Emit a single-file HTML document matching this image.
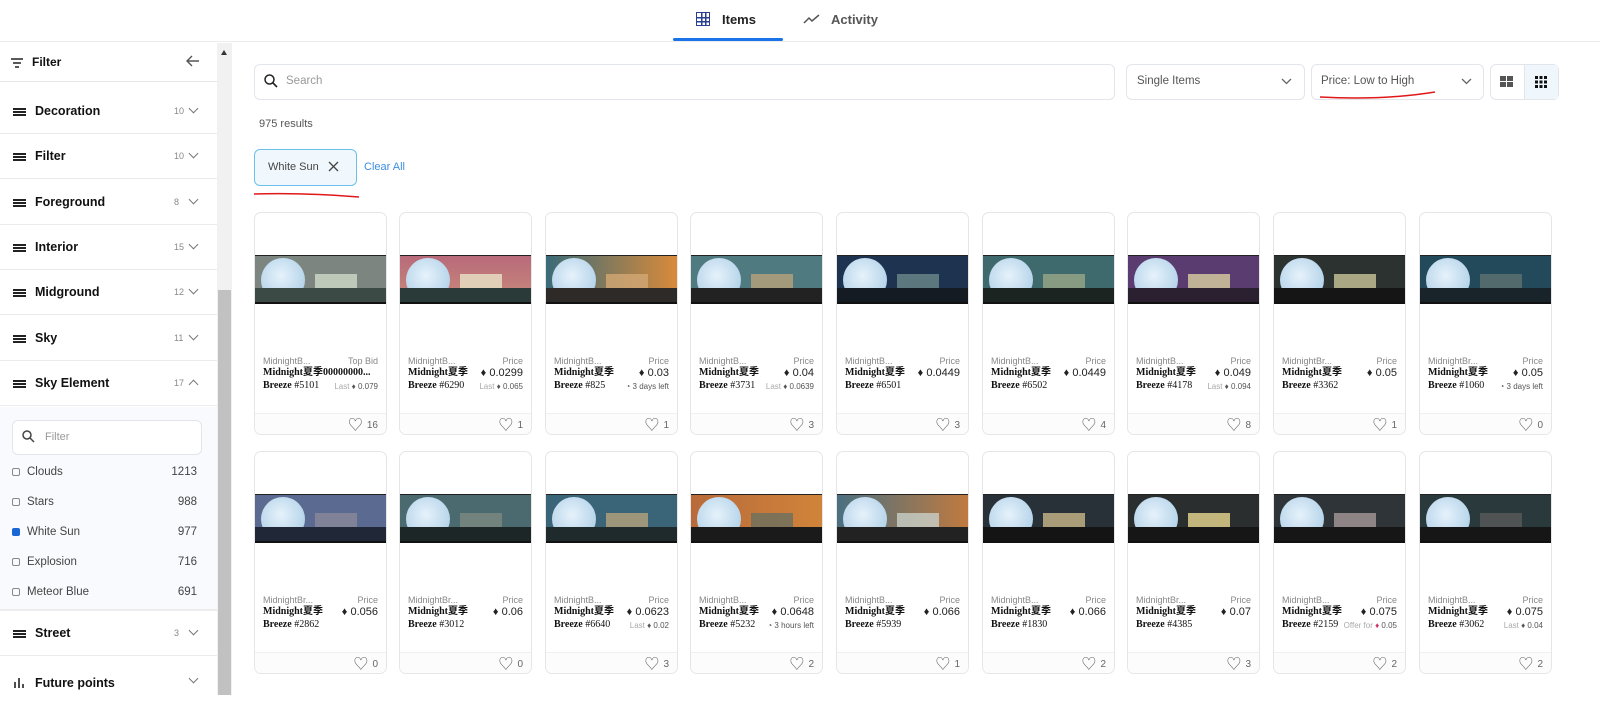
<!DOCTYPE html>
<html><head><meta charset="utf-8"><style>
*{box-sizing:border-box;margin:0;padding:0}
body{width:1600px;height:695px;overflow:hidden;background:#fff;font-family:"Liberation Sans","Noto Sans CJK SC",sans-serif;color:#333;position:relative}
.a{position:absolute}
.top{left:0;top:0;width:1600px;height:42px;border-bottom:1px solid #ececec}
.tab{font-size:13px;top:12px}
.side{left:0;top:43px;width:217px;height:652px}
.sec{position:absolute;left:0;width:217px;height:45px;border-bottom:1px solid #ececec}
.sec .ic{position:absolute;left:13px;top:19px;width:13px;height:8px;border-top:2px solid #222;border-bottom:2px solid #222}
.sec .ic:after{content:"";position:absolute;left:0;top:1px;width:13px;height:2px;background:#222}
.sec .t{position:absolute;left:35px;top:15px;font-size:12.5px;font-weight:bold;color:#111;line-height:15px}
.sec .n{position:absolute;left:174px;top:17px;font-size:9px;color:#888;line-height:11px}
.sec .cv{position:absolute;left:190px;top:16px;width:7px;height:7px;border-right:1.3px solid #777;border-bottom:1.3px solid #777;transform:rotate(45deg)}
.opt{position:absolute;left:12px;font-size:11.5px;color:#444;width:185px;line-height:14px}
.opt i{display:inline-block;width:8px;height:8px;border:1px solid #888;border-radius:2px;margin-right:7px;vertical-align:-1px}
.opt b{position:absolute;right:0;font-weight:normal}
.box{border:1px solid #e2e5ea;border-radius:6px;background:#fff}
.card{position:absolute;width:133px;height:223px;border:1px solid #e6e6e6;border-radius:7px;background:#fff;overflow:hidden}
.img{position:absolute;left:0;top:42px;width:131px;height:49px;overflow:hidden;border-top:1px solid #222;border-bottom:2px solid #111}
.img .m{position:absolute;left:6px;top:2px;width:44px;height:44px;border-radius:50%;background:radial-gradient(circle at 45% 40%,#e6f2fb,#b6d4ea 70%,#8fb6d6)}
.img .g{position:absolute;left:0;bottom:0;width:100%;height:14px;background:#1d2a2a}
.img .h{position:absolute;left:60px;top:18px;width:42px;height:22px;background:#cfd9c8;opacity:.8}
.l1,.r1,.l2,.r2,.l3,.r3{line-height:12px}
.l1{position:absolute;left:8px;top:142px;font-size:9px;color:#888}
.r1{position:absolute;right:8px;top:142px;font-size:9px;color:#888}
.l2{position:absolute;left:8px;top:154px;font-size:10px;font-weight:bold;font-family:"Liberation Serif","Noto Sans CJK SC",serif;color:#111}
.r2{position:absolute;right:8px;top:154px;font-size:11px;color:#222}
.l3{position:absolute;left:8px;top:167px;font-size:10px;color:#111;font-family:"Liberation Serif",serif}
.l3 b{font-weight:bold}
.r3{position:absolute;right:8px;top:168px;font-size:8px;color:#555}
.r3 s{text-decoration:none;color:#aaa}
.ft{position:absolute;left:0;top:200px;width:100%;height:23px;background:#fcfcfc;border-top:1px solid #f0f0f0}
.lk{position:absolute;right:8px;top:207px;font-size:10px;color:#666;line-height:12px}
.lk:before{content:"♡";font-size:15px;color:#666;margin-right:4px;vertical-align:-2px}
</style></head><body>
<div class="a top"></div>
<div class="a" style="left:696px;top:12px;width:14px;height:14px;border:1.5px solid #2a3f8f;background:linear-gradient(#2a3f8f,#2a3f8f) 3.5px 0/1.5px 100% no-repeat,linear-gradient(#2a3f8f,#2a3f8f) 8px 0/1.5px 100% no-repeat,linear-gradient(#2a3f8f,#2a3f8f) 0 3.5px/100% 1.5px no-repeat,linear-gradient(#2a3f8f,#2a3f8f) 0 8px/100% 1.5px no-repeat"></div>
<div class="a tab" style="left:722px;color:#222;font-weight:bold">Items</div>
<div class="a" style="left:673px;top:38px;width:110px;height:3px;background:#1a73e8;border-radius:2px"></div>
<svg class="a" style="left:803px;top:13px" width="17" height="12"><path d="M1 10 L6 5 L9 8 L16 2" stroke="#555" stroke-width="1.5" fill="none"/></svg>
<div class="a tab" style="left:831px;color:#555;font-weight:bold">Activity</div>

<div class="a side">
 <div class="a" style="left:0;top:0;width:217px;height:39px;border-bottom:1px solid #e6e6e6"></div>
 <svg class="a" style="left:11px;top:15px" width="12" height="10"><path d="M0 1h12M2 5h8M4 9h4" stroke="#222" stroke-width="1.6"/></svg>
 <div class="a" style="left:32px;top:12px;font-size:12px;font-weight:bold;color:#111">Filter</div>
 <svg class="a" style="left:186px;top:12px" width="14" height="12"><path d="M13 6H2M6 1L1 6l5 5" stroke="#555" stroke-width="1.4" fill="none"/></svg>
 <div class="sec" style="top:46px"><span class="ic"></span><span class="t">Decoration</span><span class="n">10</span><span class="cv"></span></div>
 <div class="sec" style="top:91px"><span class="ic"></span><span class="t">Filter</span><span class="n">10</span><span class="cv"></span></div>
 <div class="sec" style="top:137px"><span class="ic"></span><span class="t">Foreground</span><span class="n">8</span><span class="cv"></span></div>
 <div class="sec" style="top:182px"><span class="ic"></span><span class="t">Interior</span><span class="n">15</span><span class="cv"></span></div>
 <div class="sec" style="top:227px"><span class="ic"></span><span class="t">Midground</span><span class="n">12</span><span class="cv"></span></div>
 <div class="sec" style="top:273px"><span class="ic"></span><span class="t">Sky</span><span class="n">11</span><span class="cv"></span></div>
 <div class="sec" style="top:318px"><span class="ic"></span><span class="t">Sky Element</span><span class="n">17</span><span class="cv" style="transform:rotate(225deg);top:20px"></span></div>
 <div class="a" style="left:0;top:364px;width:217px;height:204px;background:#f8fafd;border-bottom:2px solid #ececec"></div>
 <div class="a box" style="left:12px;top:377px;width:190px;height:35px"></div>
 <svg class="a" style="left:22px;top:387px" width="13" height="13"><circle cx="5" cy="5" r="4" stroke="#444" stroke-width="1.5" fill="none"/><path d="M8 8l4 4" stroke="#444" stroke-width="1.5"/></svg>
 <div class="a" style="left:45px;top:388px;font-size:11px;color:#999">Filter</div>
 <div class="opt" style="top:422px"><i></i>Clouds<b>1213</b></div>
 <div class="opt" style="top:452px"><i></i>Stars<b>988</b></div>
 <div class="opt" style="top:482px"><i style="background:#1a66d6;border-color:#1a66d6"></i>White Sun<b>977</b></div>
 <div class="opt" style="top:512px"><i></i>Explosion<b>716</b></div>
 <div class="opt" style="top:542px"><i></i>Meteor Blue<b>691</b></div>
 <div class="sec" style="top:568px"><span class="ic"></span><span class="t">Street</span><span class="n">3</span><span class="cv"></span></div>
 <div class="sec" style="top:613px;border:0"><svg class="a" style="left:13px;top:22px" width="12" height="10"><path d="M2 4v6M6 0v10M10 6v4" stroke="#222" stroke-width="1.6"/></svg><span class="t" style="top:20px">Future points</span><span class="cv" style="top:19px"></span></div>
</div>
<div class="a" style="left:217px;top:43px;width:15px;height:652px;background:#f1f1f1"></div>
<div class="a" style="left:218px;top:290px;width:13px;height:405px;background:#c1c1c1"></div>
<div class="a" style="left:221px;top:50px;width:0;height:0;border-left:3.5px solid transparent;border-right:3.5px solid transparent;border-bottom:5px solid #333"></div>

<div class="a box" style="left:254px;top:64px;width:861px;height:36px"></div>
<svg class="a" style="left:264px;top:74px" width="14" height="14"><circle cx="5.5" cy="5.5" r="4.5" stroke="#222" stroke-width="1.5" fill="none"/><path d="M9 9l4 4" stroke="#222" stroke-width="1.6"/></svg>
<div class="a" style="left:286px;top:75px;font-size:11.5px;color:#999">Search</div>
<div class="a box" style="left:1126px;top:64px;width:179px;height:36px"></div>
<div class="a" style="left:1137px;top:75px;font-size:11.5px;color:#555">Single Items</div>
<svg class="a" style="left:1281px;top:78px" width="11" height="7"><path d="M1 1l4.5 4.5L10 1" stroke="#666" stroke-width="1.3" fill="none"/></svg>
<div class="a box" style="left:1311px;top:64px;width:173px;height:36px"></div>
<div class="a" style="left:1321px;top:75px;font-size:11.5px;color:#555">Price: Low to High</div>
<svg class="a" style="left:1461px;top:78px" width="11" height="7"><path d="M1 1l4.5 4.5L10 1" stroke="#666" stroke-width="1.3" fill="none"/></svg>
<svg class="a" style="left:1318px;top:88px" width="120" height="12"><path d="M2 9 C40 11 80 10 117 4" stroke="#e01818" stroke-width="1.5" fill="none"/></svg>
<div class="a box" style="left:1490px;top:64px;width:69px;height:36px"></div>
<div class="a" style="left:1524px;top:65px;width:34px;height:34px;background:#f0f7fc;border-left:1px solid #e2e5ea"></div>
<svg class="a" style="left:1500px;top:76px" width="14" height="12"><rect x="0" y="0" width="6" height="5" fill="#555"/><rect x="7" y="0" width="6" height="5" fill="#555"/><rect x="0" y="6" width="6" height="5" fill="#555"/><rect x="7" y="6" width="6" height="5" fill="#555"/></svg>
<svg class="a" style="left:1535px;top:76px" width="12" height="12"><g fill="#111"><rect x="0" y="0" width="3" height="3"/><rect x="4.5" y="0" width="3" height="3"/><rect x="9" y="0" width="3" height="3"/><rect x="0" y="4.5" width="3" height="3"/><rect x="4.5" y="4.5" width="3" height="3"/><rect x="9" y="4.5" width="3" height="3"/><rect x="0" y="9" width="3" height="3"/><rect x="4.5" y="9" width="3" height="3"/><rect x="9" y="9" width="3" height="3"/></g></svg>
<div class="a" style="left:259px;top:118px;font-size:11px;color:#555">975 results</div>
<div class="a" style="left:254px;top:149px;width:103px;height:37px;border:1px solid #6cc0ec;border-radius:6px;background:#f0f8fd"></div>
<div class="a" style="left:268px;top:161px;font-size:11px;color:#444">White Sun</div>
<svg class="a" style="left:328px;top:161px" width="11" height="11"><path d="M1 1l9 9M10 1l-9 9" stroke="#444" stroke-width="1.3"/></svg>
<div class="a" style="left:364px;top:161px;font-size:11px;color:#3d8ee0">Clear All</div>
<svg class="a" style="left:253px;top:190px" width="110" height="10"><path d="M1 4 C40 3 70 4 106 7" stroke="#e01818" stroke-width="1.5" fill="none"/></svg>

<!-- Row 1 -->
<div class="card" style="left:254px;top:212px"><div class="img" style="background:#7c8580"><div class="m"></div><div class="h"></div><div class="g" style="background:#3b4a44"></div></div><div class="l1">MidnightB...</div><div class="r1">Top Bid</div><div class="l2">Midnight夏季00000000...</div><div class="l3"><b>Breeze</b> #5101</div><div class="r3"><s>Last</s> ♦ 0.079</div><div class="ft"></div><div class="lk">16</div></div>
<div class="card" style="left:399px;top:212px"><div class="img" style="background:linear-gradient(#b86a7a,#c98a7a)"><div class="m"></div><div class="h" style="background:#e8e3c8"></div><div class="g" style="background:#2a3a38"></div></div><div class="l1">MidnightB...</div><div class="r1">Price</div><div class="l2">Midnight夏季</div><div class="r2">♦ 0.0299</div><div class="l3"><b>Breeze</b> #6290</div><div class="r3"><s>Last</s> ♦ 0.065</div><div class="ft"></div><div class="lk">1</div></div>
<div class="card" style="left:545px;top:212px"><div class="img" style="background:linear-gradient(90deg,#3a6b78,#d98a3a)"><div class="m"></div><div class="h" style="background:#d3a774"></div><div class="g" style="background:#2d2a28"></div></div><div class="l1">MidnightB...</div><div class="r1">Price</div><div class="l2">Midnight夏季</div><div class="r2">♦ 0.03</div><div class="l3"><b>Breeze</b> #825</div><div class="r3">◔ 3 days left</div><div class="ft"></div><div class="lk">1</div></div>
<div class="card" style="left:690px;top:212px"><div class="img" style="background:#4e7a80"><div class="m"></div><div class="h" style="background:#b9a27a"></div><div class="g" style="background:#222"></div></div><div class="l1">MidnightB...</div><div class="r1">Price</div><div class="l2">Midnight夏季</div><div class="r2">♦ 0.04</div><div class="l3"><b>Breeze</b> #3731</div><div class="r3"><s>Last</s> ♦ 0.0639</div><div class="ft"></div><div class="lk">3</div></div>
<div class="card" style="left:836px;top:212px"><div class="img" style="background:#1e3350"><div class="m"></div><div class="h" style="background:#6b8a8a"></div><div class="g" style="background:#151b22"></div></div><div class="l1">MidnightB...</div><div class="r1">Price</div><div class="l2">Midnight夏季</div><div class="r2">♦ 0.0449</div><div class="l3"><b>Breeze</b> #6501</div><div class="ft"></div><div class="lk">3</div></div>
<div class="card" style="left:982px;top:212px"><div class="img" style="background:#3e6a6e"><div class="m"></div><div class="h" style="background:#9aa788"></div><div class="g" style="background:#1c2422"></div></div><div class="l1">MidnightB...</div><div class="r1">Price</div><div class="l2">Midnight夏季</div><div class="r2">♦ 0.0449</div><div class="l3"><b>Breeze</b> #6502</div><div class="ft"></div><div class="lk">4</div></div>
<div class="card" style="left:1127px;top:212px"><div class="img" style="background:#5a3c70"><div class="m"></div><div class="h" style="background:#d9cfa0"></div><div class="g" style="background:#2a2030"></div></div><div class="l1">MidnightB...</div><div class="r1">Price</div><div class="l2">Midnight夏季</div><div class="r2">♦ 0.049</div><div class="l3"><b>Breeze</b> #4178</div><div class="r3"><s>Last</s> ♦ 0.094</div><div class="ft"></div><div class="lk">8</div></div>
<div class="card" style="left:1273px;top:212px"><div class="img" style="background:#2b3230"><div class="m"></div><div class="h" style="background:#c9c49a"></div><div class="g" style="background:#151515"></div></div><div class="l1">MidnightBr...</div><div class="r1">Price</div><div class="l2">Midnight夏季</div><div class="r2">♦ 0.05</div><div class="l3"><b>Breeze</b> #3362</div><div class="ft"></div><div class="lk">1</div></div>
<div class="card" style="left:1419px;top:212px"><div class="img" style="background:#234a5a"><div class="m"></div><div class="h" style="background:#5e7270"></div><div class="g" style="background:#18242a"></div></div><div class="l1">MidnightBr...</div><div class="r1">Price</div><div class="l2">Midnight夏季</div><div class="r2">♦ 0.05</div><div class="l3"><b>Breeze</b> #1060</div><div class="r3">◔ 3 days left</div><div class="ft"></div><div class="lk">0</div></div>
<!-- Row 2 -->
<div class="card" style="left:254px;top:451px"><div class="img" style="background:#5a6a90"><div class="m"></div><div class="h" style="background:#8a8a9a"></div><div class="g" style="background:#202838"></div></div><div class="l1">MidnightBr...</div><div class="r1">Price</div><div class="l2">Midnight夏季</div><div class="r2">♦ 0.056</div><div class="l3"><b>Breeze</b> #2862</div><div class="ft"></div><div class="lk">0</div></div>
<div class="card" style="left:399px;top:451px"><div class="img" style="background:#4a6a70"><div class="m"></div><div class="h" style="background:#7a8a80"></div><div class="g" style="background:#1d2626"></div></div><div class="l1">MidnightBr...</div><div class="r1">Price</div><div class="l2">Midnight夏季</div><div class="r2">♦ 0.06</div><div class="l3"><b>Breeze</b> #3012</div><div class="ft"></div><div class="lk">0</div></div>
<div class="card" style="left:545px;top:451px"><div class="img" style="background:#3a6478"><div class="m"></div><div class="h" style="background:#b7a27a"></div><div class="g" style="background:#1e2a2c"></div></div><div class="l1">MidnightB...</div><div class="r1">Price</div><div class="l2">Midnight夏季</div><div class="r2">♦ 0.0623</div><div class="l3"><b>Breeze</b> #6640</div><div class="r3"><s>Last</s> ♦ 0.02</div><div class="ft"></div><div class="lk">3</div></div>
<div class="card" style="left:690px;top:451px"><div class="img" style="background:linear-gradient(90deg,#b86a3a,#d0843a)"><div class="m"></div><div class="h" style="background:#6a7060"></div><div class="g" style="background:#1a1a1a"></div></div><div class="l1">MidnightB...</div><div class="r1">Price</div><div class="l2">Midnight夏季</div><div class="r2">♦ 0.0648</div><div class="l3"><b>Breeze</b> #5232</div><div class="r3">◔ 3 hours left</div><div class="ft"></div><div class="lk">2</div></div>
<div class="card" style="left:836px;top:451px"><div class="img" style="background:linear-gradient(90deg,#4a7080,#c07a40)"><div class="m"></div><div class="h" style="background:#c8d0c8"></div><div class="g" style="background:#222"></div></div><div class="l1">MidnightB...</div><div class="r1">Price</div><div class="l2">Midnight夏季</div><div class="r2">♦ 0.066</div><div class="l3"><b>Breeze</b> #5939</div><div class="ft"></div><div class="lk">1</div></div>
<div class="card" style="left:982px;top:451px"><div class="img" style="background:#283038"><div class="m"></div><div class="h" style="background:#c8b88a"></div><div class="g" style="background:#141414"></div></div><div class="l1">MidnightB...</div><div class="r1">Price</div><div class="l2">Midnight夏季</div><div class="r2">♦ 0.066</div><div class="l3"><b>Breeze</b> #1830</div><div class="ft"></div><div class="lk">2</div></div>
<div class="card" style="left:1127px;top:451px"><div class="img" style="background:#2a2e2e"><div class="m"></div><div class="h" style="background:#e8d890"></div><div class="g" style="background:#161616"></div></div><div class="l1">MidnightBr...</div><div class="r1">Price</div><div class="l2">Midnight夏季</div><div class="r2">♦ 0.07</div><div class="l3"><b>Breeze</b> #4385</div><div class="ft"></div><div class="lk">3</div></div>
<div class="card" style="left:1273px;top:451px"><div class="img" style="background:#2e3438"><div class="m"></div><div class="h" style="background:#a89898"></div><div class="g" style="background:#161616"></div></div><div class="l1">MidnightB...</div><div class="r1">Price</div><div class="l2">Midnight夏季</div><div class="r2">♦ 0.075</div><div class="l3"><b>Breeze</b> #2159</div><div class="r3"><s>Offer for</s> <span style="color:#d0306a">♦</span> 0.05</div><div class="ft"></div><div class="lk">2</div></div>
<div class="card" style="left:1419px;top:451px"><div class="img" style="background:#2a3a3c"><div class="m"></div><div class="h" style="background:#5a5a5a"></div><div class="g" style="background:#161616"></div></div><div class="l1">MidnightB...</div><div class="r1">Price</div><div class="l2">Midnight夏季</div><div class="r2">♦ 0.075</div><div class="l3"><b>Breeze</b> #3062</div><div class="r3"><s>Last</s> ♦ 0.04</div><div class="ft"></div><div class="lk">2</div></div>
</body></html>
